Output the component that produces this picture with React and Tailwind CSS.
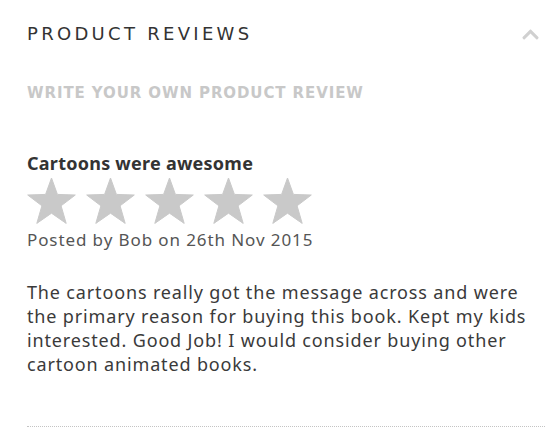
import { FaChevronUp } from "react-icons/fa";

const Star = () => (
  <svg width="49" height="46" viewBox="0 0 49 46" className="shrink-0">
    <path
      d="M24.5 0 L30.4 16.4 L48.3 17 L34.1 27.8 L39.2 45.4 L24.5 35.2 L9.8 45.4 L14.9 27.8 L0.7 17 L18.6 16.4 Z"
      fill="#c9c9c9"
      stroke="#c9c9c9"
      strokeWidth="1"
      strokeLinejoin="round"
    />
  </svg>
);

export default function App() {
  return (
    <div className="min-h-screen bg-white pl-[27px] pr-[15px] pt-[22px]" style={{ fontFamily: '"Noto Sans", sans-serif' }}>
      <div className="flex h-6 items-center justify-between">
        <h2
          className="text-[18px] font-normal uppercase leading-6 tracking-[3.3px] text-[#333]"
          style={{ fontFamily: '"DejaVu Sans", sans-serif' }}
        >
          Product Reviews
        </h2>
        <FaChevronUp className="mr-[5px] text-[19px] text-[#d0d0d0]" />
      </div>

      <div
        className="mt-[37px] text-[15px] font-bold uppercase leading-5 tracking-[0.9px] text-[#c8c8c8]"
        style={{ fontFamily: '"DejaVu Sans", sans-serif' }}
      >
        Write your own product review
      </div>

      <h3 className="mt-[48px] text-[18px] font-bold leading-6 tracking-[0.25px] text-[#333]">Cartoons were awesome</h3>

      <div className="mt-[3px] flex gap-[10px]">
        <Star />
        <Star />
        <Star />
        <Star />
        <Star />
      </div>

      <p className="mt-[4px] text-[17px] leading-6 tracking-[0.9px] text-[#555]">Posted by Bob on 26th Nov 2015</p>

      <p className="mt-[28px] text-[18px] leading-6 tracking-[0.85px] text-[#3a3a3a]">
        The cartoons really got the message across and were the primary reason for buying this book. Kept my kids
        interested. Good Job! I would consider buying other cartoon animated books.
      </p>

      <div className="mt-[50px] border-t border-dotted border-[#c4c4c4]" />
    </div>
  );
}
